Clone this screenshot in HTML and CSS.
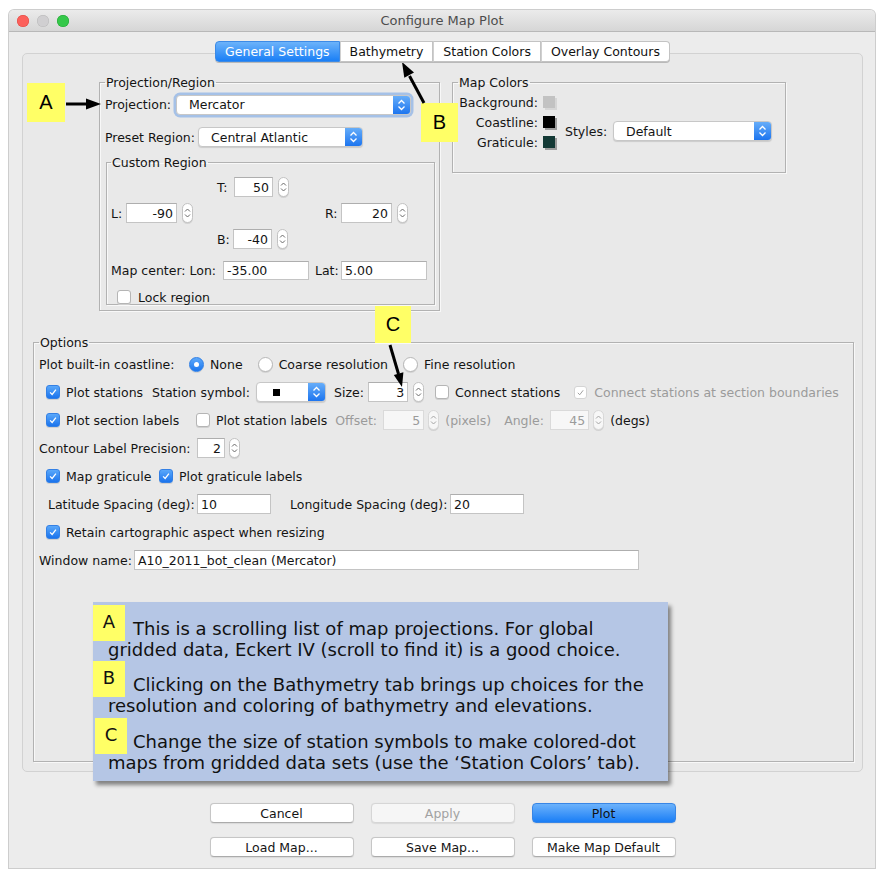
FILE: index.html
```html
<!DOCTYPE html>
<html>
<head>
<meta charset="utf-8">
<title>Configure Map Plot</title>
<link rel="stylesheet" href="styles.css">
</head>
<body>
<div class="window">
  <div class="titlebar">
    <div class="lights"><span class="light l-red"></span><span class="light l-grey"></span><span class="light l-green"></span></div>
    <div class="title">Configure Map Plot</div>
    <div></div>
  </div>
  <div class="wbody">
    <div class="tabs">
      <div class="tab active">General Settings</div>
      <div class="tab">Bathymetry</div>
      <div class="tab">Station Colors</div>
      <div class="tab">Overlay Contours</div>
    </div>
    <div class="pane">
      <div class="top-row">
        <fieldset class="group proj">
          <legend>Projection/Region</legend>
          <div class="row r-proj">
            <span class="lbl w-proj">Projection:</span>
            <div class="combo focused c-proj"><span class="val">Mercator</span><span class="arr"><svg width="9" height="14" viewBox="0 0 9 14"><path d="M1.5 5.5L4.5 2.5 7.5 5.5M1.5 8.5L4.5 11.5 7.5 8.5" fill="none" stroke="#fff" stroke-width="1.3"/></svg></span></div>
          </div>
          <div class="row r-preset">
            <span class="lbl w-preset">Preset Region:</span>
            <div class="combo c-preset"><span class="val">Central Atlantic</span><span class="arr"><svg width="9" height="14" viewBox="0 0 9 14"><path d="M1.5 5.5L4.5 2.5 7.5 5.5M1.5 8.5L4.5 11.5 7.5 8.5" fill="none" stroke="#fff" stroke-width="1.3"/></svg></span></div>
          </div>
          <fieldset class="group custom">
            <legend>Custom Region</legend>
            <div class="cross">
              <div class="num pos-t"><span class="lbl w-t">T:</span><span class="tf r w39">50</span><span class="spin"><svg width="9" height="18" viewBox="0 0 9 18"><path d="M2 7.5L4.5 5 7 7.5M2 10.5L4.5 13 7 10.5" fill="none" stroke="#6a6a6a" stroke-width="1"/></svg></span></div>
              <div class="num pos-l"><span class="lbl w-l">L:</span><span class="tf r w51">-90</span><span class="spin"><svg width="9" height="18" viewBox="0 0 9 18"><path d="M2 7.5L4.5 5 7 7.5M2 10.5L4.5 13 7 10.5" fill="none" stroke="#6a6a6a" stroke-width="1"/></svg></span></div>
              <div class="num pos-r"><span class="lbl w-r">R:</span><span class="tf r w51">20</span><span class="spin"><svg width="9" height="18" viewBox="0 0 9 18"><path d="M2 7.5L4.5 5 7 7.5M2 10.5L4.5 13 7 10.5" fill="none" stroke="#6a6a6a" stroke-width="1"/></svg></span></div>
              <div class="num pos-b"><span class="lbl w-b">B:</span><span class="tf r w39">-40</span><span class="spin"><svg width="9" height="18" viewBox="0 0 9 18"><path d="M2 7.5L4.5 5 7 7.5M2 10.5L4.5 13 7 10.5" fill="none" stroke="#6a6a6a" stroke-width="1"/></svg></span></div>
            </div>
            <div class="row r-center">
              <span class="lbl w-center">Map center: Lon:</span>
              <span class="tf w86">-35.00</span>
              <span class="lbl w-lat">Lat:</span>
              <span class="tf w86">5.00</span>
            </div>
            <div class="row r-lock">
              <span class="cb"></span><span class="cbt">Lock region</span>
            </div>
          </fieldset>
        </fieldset>

        <fieldset class="group colors">
          <legend>Map Colors</legend>
          <div class="colors-body">
            <div class="swatches">
              <div class="swrow"><span>Background:</span><span class="sw sw-bg"></span></div>
              <div class="swrow"><span>Coastline:</span><span class="sw sw-coast"></span></div>
              <div class="swrow"><span>Graticule:</span><span class="sw sw-grat"></span></div>
            </div>
            <div class="styles">
              <span class="lbl w-styles">Styles:</span>
              <div class="combo c-styles"><span class="val">Default</span><span class="arr"><svg width="9" height="14" viewBox="0 0 9 14"><path d="M1.5 5.5L4.5 2.5 7.5 5.5M1.5 8.5L4.5 11.5 7.5 8.5" fill="none" stroke="#fff" stroke-width="1.3"/></svg></span></div>
            </div>
          </div>
        </fieldset>
      </div>

      <fieldset class="group options">
        <legend>Options</legend>
        <div class="row orow first">
          <span class="lbl w-coast">Plot built-in coastline:</span>
          <span class="rb on"></span><span class="cbt">None</span>
          <span class="rb gap15"></span><span class="cbt">Coarse resolution</span>
          <span class="rb gap15"></span><span class="cbt">Fine resolution</span>
        </div>
        <div class="row orow">
          <span class="cb on ind"><svg width="14" height="14" viewBox="0 0 14 14"><path d="M3.6 7.4L6 9.9 10.4 4.2" fill="none" stroke="#fff" stroke-width="1.5"/></svg></span><span class="cbt">Plot stations</span>
          <span class="lbl ml9 w-sym">Station symbol:</span>
          <div class="combo c-sym"><span class="val"><span class="sq"></span></span><span class="arr"><svg width="9" height="14" viewBox="0 0 9 14"><path d="M1.5 5.5L4.5 2.5 7.5 5.5M1.5 8.5L4.5 11.5 7.5 8.5" fill="none" stroke="#fff" stroke-width="1.3"/></svg></span></div>
          <span class="lbl ml8 w-size">Size:</span>
          <span class="tf r w40">3</span>
          <span class="spin"><svg width="9" height="18" viewBox="0 0 9 18"><path d="M2 7.5L4.5 5 7 7.5M2 10.5L4.5 13 7 10.5" fill="none" stroke="#6a6a6a" stroke-width="1"/></svg></span>
          <span class="cb ml11"></span><span class="cbt">Connect stations</span>
          <span class="cb dis ml14"><svg width="13" height="13" viewBox="0 0 14 14"><path d="M3.6 7.4L6 9.9 10.4 4.2" fill="none" stroke="#9a9a9a" stroke-width="1.2"/></svg></span><span class="cbt dim">Connect stations at section boundaries</span>
        </div>
        <div class="row orow">
          <span class="cb on ind"><svg width="14" height="14" viewBox="0 0 14 14"><path d="M3.6 7.4L6 9.9 10.4 4.2" fill="none" stroke="#fff" stroke-width="1.5"/></svg></span><span class="cbt w-secl">Plot section labels</span>
          <span class="cb ml17"></span><span class="cbt">Plot station labels</span>
          <span class="lbl dim ml8 w-offset">Offset:</span>
          <span class="tf r w41 disabled">5</span>
          <span class="spin dspin"><svg width="9" height="18" viewBox="0 0 9 18"><path d="M2 7.5L4.5 5 7 7.5M2 10.5L4.5 13 7 10.5" fill="none" stroke="#a5a5a5" stroke-width="1"/></svg></span>
          <span class="lbl dim ml6">(pixels)</span>
          <span class="lbl dim ml13 w-angle">Angle:</span>
          <span class="tf r w39 disabled">45</span>
          <span class="spin dspin"><svg width="9" height="18" viewBox="0 0 9 18"><path d="M2 7.5L4.5 5 7 7.5M2 10.5L4.5 13 7 10.5" fill="none" stroke="#a5a5a5" stroke-width="1"/></svg></span>
          <span class="lbl ml6">(degs)</span>
        </div>
        <div class="row orow">
          <span class="lbl w-prec">Contour Label Precision:</span>
          <span class="tf r w28">2</span>
          <span class="spin ml4"><svg width="9" height="18" viewBox="0 0 9 18"><path d="M2 7.5L4.5 5 7 7.5M2 10.5L4.5 13 7 10.5" fill="none" stroke="#6a6a6a" stroke-width="1"/></svg></span>
        </div>
        <div class="row orow">
          <span class="cb on ind"><svg width="14" height="14" viewBox="0 0 14 14"><path d="M3.6 7.4L6 9.9 10.4 4.2" fill="none" stroke="#fff" stroke-width="1.5"/></svg></span><span class="cbt w-grat">Map graticule</span>
          <span class="cb on"><svg width="14" height="14" viewBox="0 0 14 14"><path d="M3.6 7.4L6 9.9 10.4 4.2" fill="none" stroke="#fff" stroke-width="1.5"/></svg></span><span class="cbt">Plot graticule labels</span>
        </div>
        <div class="row orow">
          <span class="lbl ml9 w-lats">Latitude Spacing (deg):</span>
          <span class="tf w74">10</span>
          <span class="lbl ml19 w-lons">Longitude Spacing (deg):</span>
          <span class="tf w74">20</span>
        </div>
        <div class="row orow">
          <span class="cb on ind"><svg width="14" height="14" viewBox="0 0 14 14"><path d="M3.6 7.4L6 9.9 10.4 4.2" fill="none" stroke="#fff" stroke-width="1.5"/></svg></span><span class="cbt">Retain cartographic aspect when resizing</span>
        </div>
        <div class="row orow">
          <span class="lbl w-wname">Window name:</span>
          <span class="tf w505">A10_2011_bot_clean (Mercator)</span>
        </div>
      </fieldset>
    </div>

    <div class="buttons">
      <button class="btn">Cancel</button>
      <button class="btn disabled">Apply</button>
      <button class="btn default">Plot</button>
      <button class="btn">Load Map...</button>
      <button class="btn">Save Map...</button>
      <button class="btn">Make Map Default</button>
    </div>
  </div>
</div>

<div class="tag tag-a">A</div>
<div class="tag tag-b">B</div>
<div class="tag tag-c">C</div>

<svg class="arrows" width="882" height="873" viewBox="0 0 882 873">
  <line x1="66" y1="104" x2="88" y2="104" stroke="#000" stroke-width="3"/>
  <polygon points="101,104 86,98.5 86,109.5" fill="#000"/>
  <line x1="424" y1="103" x2="409.5" y2="76" stroke="#000" stroke-width="3"/>
  <polygon points="402,62 414,72.6 404.3,77.8" fill="#000"/>
  <line x1="390" y1="345" x2="398.5" y2="374" stroke="#000" stroke-width="3"/>
  <polygon points="402,387 403.4,372.2 393.8,375" fill="#000"/>
</svg>

<div class="callout">
  <p><span class="key">A</span>This is a scrolling list of map projections. For global<br>gridded data, Eckert IV (scroll to find it) is a good choice.</p>
  <p><span class="key">B</span>Clicking on the Bathymetry tab brings up choices for the<br>resolution and coloring of bathymetry and elevations.</p>
  <p><span class="key key-c">C</span>Change the size of station symbols to make colored-dot<br>maps from gridded data sets (use the ‘Station Colors’ tab).</p>
</div>
</body>
</html>
```

FILE: styles.css
```css
* { box-sizing: border-box; }
html, body { margin: 0; padding: 0; }
body {
  background: #fff;
  width: 882px;
  height: 873px;
  position: relative;
  overflow: hidden;
  padding: 10px 0 0 9px;
  font-family: "DejaVu Sans", "Noto Sans", sans-serif;
  font-size: 12.5px;
  color: #141414;
}

/* window */
.window {
  width: 866px;
  height: 858px;
  background: #ececec;
  border-radius: 5px 5px 0 0;
  box-shadow: 0 0 0 1px #cdcdcd;
}
.titlebar {
  height: 22px;
  display: grid;
  grid-template-columns: 1fr auto 1fr;
  align-items: center;
  background: linear-gradient(#ebebeb, #d6d6d6);
  border-bottom: 1px solid #b8b8b8;
  border-radius: 5px 5px 0 0;
}
.lights { display: flex; gap: 8px; margin-left: 8px; }
.light { width: 12px; height: 12px; border-radius: 50%; }
.l-red { background: #fc605b; box-shadow: inset 0 0 0 0.5px #de4841; }
.l-grey { background: #d0cfd1; box-shadow: inset 0 0 0 0.5px #b8b8b8; }
.l-green { background: #35c84a; box-shadow: inset 0 0 0 0.5px #20a432; }
.title { font-size: 13px; color: #4d4d4d; }

.wbody { padding: 9px 12px 0 13px; }

/* tabs */
.tabs {
  display: flex;
  justify-content: center;
  height: 21px;
  position: relative;
  z-index: 1;
}
.tab {
  padding: 0 9px;
  line-height: 19px;
  background: #fff;
  border: 1px solid #c3c3c3;
  border-left: 1px solid #d0d0d0;
  box-shadow: 0 1px 0 #b9b9b9;
  color: #111;
}
.tab:first-child { border-left-color: #c3c3c3; border-radius: 4px 0 0 4px; }
.tab:last-child { border-radius: 0 4px 4px 0; }
.tab.active {
  background: linear-gradient(#6cb3fa, #1a7ff6);
  border-color: #3c8ae6;
  color: #fff;
}

/* pane */
.pane {
  margin-top: -9px;
  height: 719px;
  border: 1px solid #d2d2d2;
  border-radius: 5px;
  background: #e9e9e9;
  padding: 21px 8px 9px 10px;
  display: flex;
  flex-direction: column;
}
.top-row { display: flex; align-items: flex-start; margin-left: 66px; gap: 12px; }

fieldset.group {
  margin: 0;
  min-width: 0;
  padding: 0 4px 5px 5px;
  border: 1px solid #b2b2b2;
  box-shadow: inset 1px 1px 0 #f8f8f8, 1px 1px 0 #f8f8f8;
}
legend { padding: 0 1px; line-height: 15px; }

.row { display: flex; align-items: center; height: 20px; }
.lbl { flex: none; white-space: nowrap; }
.cbt { white-space: nowrap; margin-left: 6px; }
.dim { color: #9b9b9b; }

/* projection group */
fieldset.proj { width: 341px; }
.r-proj { margin-top: 4px; height: 21px; }
.r-preset { margin-top: 12px; }
.w-proj { width: 71px; }
.w-preset { width: 93px; }
.c-proj { width: 235px; height: 21px; }
.c-preset { width: 165px; }

fieldset.custom { width: 329px; margin: 8px 0 0 1px; padding: 0 4px 0 4px; }
.cross {
  margin-top: 7px;
  display: grid;
  grid-template-columns: 106px 108px 1fr;
  grid-template-rows: 20px 20px 20px;
  row-gap: 6px;
}
.num { display: flex; align-items: center; }
.pos-t { grid-column: 2; grid-row: 1; }
.pos-l { grid-column: 1; grid-row: 2; }
.pos-r { grid-column: 3; grid-row: 2; }
.pos-b { grid-column: 2; grid-row: 3; }
.w-t { width: 17px; }
.w-b { width: 16px; }
.w-l { width: 15px; }
.w-r { width: 16px; }
.r-center { margin-top: 12px; height: 19px; }
.r-center .tf { height: 19px; }
.w-center { width: 112px; }
.w-lat { width: 26px; margin-left: 6px; }
.r-lock { margin-top: 10px; height: 14px; padding-left: 6px; }
.r-lock .cbt { margin-left: 7px; }

/* map colors */
fieldset.colors { width: 334px; padding: 0 6px 20px 5px; }
.colors-body { display: flex; align-items: flex-start; margin-top: 2px; }
.swatches { width: 99px; display: flex; flex-direction: column; }
.swrow { height: 20px; display: flex; align-items: center; justify-content: flex-end; padding-right: 2px; }
.sw { width: 12px; height: 12px; margin-left: 5px; box-shadow: 2px 2px 0 #9c9c9c; }
.sw-bg { background: #c2c2c2; box-shadow: 2px 2px 0 #d6d6d6; }
.sw-coast { background: #000; }
.sw-grat { background: #143a36; }
.styles { display: flex; align-items: center; margin-top: 29px; }
.w-styles { width: 48px; margin-left: 8px; }
.c-styles { width: 159px; }

/* form controls */
.tf {
  flex: none;
  height: 20px;
  background: #fff;
  border: 1px solid #c4c4c4;
  border-top-color: #aeaeae;
  padding: 0 3px;
  display: flex;
  align-items: center;
  white-space: nowrap;
  overflow: hidden;
}
.tf.r { justify-content: flex-end; }
.tf.disabled { background: #f7f7f7; color: #9b9b9b; border-color: #dadada; }
.w28 { width: 28px; }
.w39 { width: 39px; }
.w40 { width: 40px; }
.w41 { width: 41px; }
.w51 { width: 51px; }
.w74 { width: 74px; }
.w86 { width: 86px; }
.w505 { width: 505px; }

.spin {
  flex: none;
  width: 11px;
  height: 20px;
  margin-left: 5px;
  border: 1px solid #c2c2c2;
  border-radius: 6px;
  background: #fff;
  box-shadow: 0 1px 0 #d2d2d2;
  display: flex;
  align-items: center;
  justify-content: center;
}
.spin svg { display: block; }
.dspin { background: #f7f7f7; border-color: #d8d8d8; margin-left: 4px; }

.combo {
  flex: none;
  height: 20px;
  display: flex;
  background: #fff;
  border: 1px solid #c7c7c7;
  border-radius: 4px;
  box-shadow: 0 1px 1px rgba(0,0,0,0.13);
  overflow: hidden;
}
.combo.focused { box-shadow: 0 0 0 2.5px rgba(110,160,230,0.55); }
.combo .val { flex: 1; padding-left: 12px; display: flex; align-items: center; white-space: nowrap; }
.combo .arr {
  width: 17px;
  background: linear-gradient(#66adf9, #1d75ef);
  display: flex;
  align-items: center;
  justify-content: center;
}
.c-sym { width: 70px; margin-left: 7px; }
.c-sym .val { padding-left: 16px; }
.sq { width: 7px; height: 7px; background: #000; }

.cb {
  flex: none;
  width: 14px;
  height: 14px;
  border: 1px solid #b5b5b5;
  border-radius: 3px;
  background: #fff;
  box-shadow: 0 1px 0 #d0d0d0;
  display: flex;
  align-items: center;
  justify-content: center;
}
.cb svg { display: block; }
.cb.on { background: linear-gradient(#5aa8fa, #1b74ed); border-color: #3380e5; }
.cb.dis { width: 13px; height: 13px; border-color: #d4d4d4; box-shadow: none; }
.cb.ind { margin-left: 7px; }

.rb {
  flex: none;
  width: 15px;
  height: 15px;
  border-radius: 50%;
  border: 1px solid #b7b7b7;
  background: #fff;
  box-shadow: 0 1px 0 #d2d2d2;
  display: flex;
  align-items: center;
  justify-content: center;
}
.rb.on { background: linear-gradient(#5ea9fa, #1b76ee); border-color: #2f7fe6; }
.rb.on::after { content: ""; width: 5px; height: 5px; border-radius: 50%; background: #fff; }

/* options */
fieldset.options { flex: 1; margin-top: 24px; padding: 0 5px; }
.orow { margin-top: 8px; }
.orow.first { margin-top: 4px; }
.w-coast { width: 150px; }
.gap15 { margin-left: 15px; }
.ml4 { margin-left: 4px; }
.ml6 { margin-left: 6px; }
.ml8 { margin-left: 8px; }
.ml9 { margin-left: 9px; }
.ml11 { margin-left: 11px; }
.ml13 { margin-left: 13px; }
.ml14 { margin-left: 14px; }
.ml17 { margin-left: 17px; }
.ml19 { margin-left: 19px; }
.w-sym { width: 97px; }
.w-size { width: 34px; }
.w-secl { width: 113px; }
.w-offset { width: 48px; }
.w-angle { width: 46px; }
.w-prec { width: 158px; }
.w-grat { width: 93px; }
.w-lats { width: 149px; }
.w-lons { width: 160px; }
.w-wname { width: 95px; }
.cb.dis + .cbt { margin-left: 7px; }

/* buttons */
.buttons {
  margin-top: 31px;
  display: grid;
  grid-template-columns: repeat(3, 144px);
  column-gap: 17px;
  row-gap: 14px;
  justify-content: center;
}
.btn {
  height: 20px;
  padding: 0;
  font-family: inherit;
  font-size: 12.5px;
  color: #141414;
  background: #fff;
  border: 1px solid #c6c6c6;
  border-bottom-color: #ababab;
  border-radius: 4px;
  box-shadow: 0 0.5px 1px rgba(0,0,0,0.08);
}
.btn.disabled { background: #f6f6f6; color: #a2a2a2; border-color: #d6d6d6; }
.btn.default { background: linear-gradient(#6cb2fb, #1a7ef6); border-color: #3886e6; color: #111; }

/* annotations */
.tag {
  position: absolute;
  background: #ffff66;
  font-family: "Liberation Sans", Arial, sans-serif;
  font-size: 20px;
  color: #000;
  display: flex;
  align-items: center;
  justify-content: center;
}
.tag-a { left: 27px; top: 83px; width: 38px; height: 39px; }
.tag-b { left: 421px; top: 103px; width: 37px; height: 39px; }
.tag-c { left: 375px; top: 306px; width: 36px; height: 37px; }

.arrows { position: absolute; left: 0; top: 0; pointer-events: none; }

.callout {
  position: absolute;
  left: 93px;
  top: 602px;
  width: 575px;
  background: #b5c6e5;
  box-shadow: 3px 4px 4px rgba(0,0,0,0.45);
  padding: 16px 6px 8px 15px;
  font-family: "DejaVu Sans", Verdana, sans-serif;
  font-size: 18px;
  line-height: 21px;
  color: #111;
}
.callout p { margin: 0 0 15px; white-space: nowrap; }
.callout p:first-child { margin-bottom: 14px; }
.callout p:last-child { margin-bottom: 0; }
.key {
  float: left;
  width: 32px;
  height: 36px;
  margin: -13px 8px -2px -15px;
  background: #ffff66;
  text-align: center;
  line-height: 34px;
  font-size: 18px;
}
.key-c { margin-left: -13px; margin-right: 6px; }
```
